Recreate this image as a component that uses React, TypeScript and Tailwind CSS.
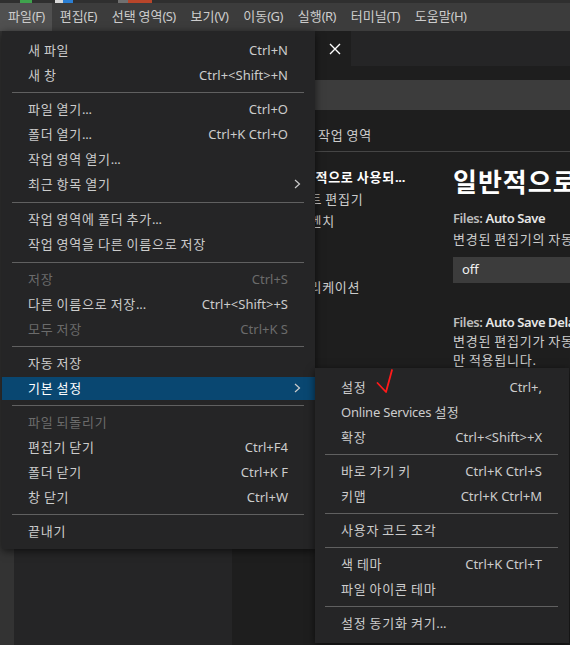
import React from 'react';

const FONT = { fontFamily: '"Noto Sans", "Noto Sans CJK KR", sans-serif' };

// hangul runs get a little extra spacing, latin runs a little less,
// to get closer to the Segoe UI / Malgun Gothic widths of the original
const K = ({ text, ko = 'tracking-[0.75px]', la = 'tracking-[-0.2px]' }: { text: string; ko?: string; la?: string }) => (
  <span>
    {text.split(/([\uAC00-\uD7A3]+)/).map((part, i) =>
      part === '' ? null : (
        <span key={i} className={/[\uAC00-\uD7A3]/.test(part) ? ko : la}>
          {part}
        </span>
      )
    )}
  </span>
);

type Entry =
  | { sep: true; h?: number }
  | { label: string; shortcut?: string; disabled?: boolean; active?: boolean; submenu?: boolean };

const fileMenu: Entry[] = [
  { label: '새 파일', shortcut: 'Ctrl+N' },
  { label: '새 창', shortcut: 'Ctrl+<Shift>+N' },
  { sep: true, h: 9 },
  { label: '파일 열기...', shortcut: 'Ctrl+O' },
  { label: '폴더 열기...', shortcut: 'Ctrl+K Ctrl+O' },
  { label: '작업 영역 열기...' },
  { label: '최근 항목 열기', submenu: true },
  { sep: true, h: 10 },
  { label: '작업 영역에 폴더 추가...' },
  { label: '작업 영역을 다른 이름으로 저장' },
  { sep: true, h: 10 },
  { label: '저장', shortcut: 'Ctrl+S', disabled: true },
  { label: '다른 이름으로 저장...', shortcut: 'Ctrl+<Shift>+S' },
  { label: '모두 저장', shortcut: 'Ctrl+K S', disabled: true },
  { sep: true, h: 9 },
  { label: '자동 저장' },
  { label: '기본 설정', active: true, submenu: true },
  { sep: true, h: 9 },
  { label: '파일 되돌리기', disabled: true },
  { label: '편집기 닫기', shortcut: 'Ctrl+F4' },
  { label: '폴더 닫기', shortcut: 'Ctrl+K F' },
  { label: '창 닫기', shortcut: 'Ctrl+W' },
  { sep: true, h: 9 },
  { label: '끝내기' },
];

const prefMenu: Entry[] = [
  { label: '설정', shortcut: 'Ctrl+,' },
  { label: 'Online Services 설정' },
  { label: '확장', shortcut: 'Ctrl+<Shift>+X' },
  { sep: true, h: 9 },
  { label: '바로 가기 키', shortcut: 'Ctrl+K Ctrl+S' },
  { label: '키맵', shortcut: 'Ctrl+K Ctrl+M' },
  { sep: true, h: 9 },
  { label: '사용자 코드 조각' },
  { sep: true, h: 9 },
  { label: '색 테마', shortcut: 'Ctrl+K Ctrl+T' },
  { label: '파일 아이콘 테마' },
  { sep: true, h: 9 },
  { label: '설정 동기화 켜기...' },
];

const Chevron = () => (
  <svg width="7" height="10" viewBox="0 0 7 10" className="absolute right-[14px] top-[6px]">
    <path d="M1 1 L5.5 5 L1 9" fill="none" stroke="#cccccc" strokeWidth="1.2" />
  </svg>
);

const MenuList = ({ items }: { items: Entry[] }) => (
  <>
    {items.map((e, i) =>
      'sep' in e ? (
        <div key={i} className="flex items-center pl-[10px] pr-[11px]" style={{ height: e.h }}>
          <div className="h-px w-full bg-[#606060]" />
        </div>
      ) : (
        <div key={i} className="h-[25px] py-px">
          <div
            className={`relative flex h-[23px] items-center pl-[26px] pr-[27px] text-[13px] whitespace-nowrap ${
              e.active ? 'bg-[#094771] text-white' : e.disabled ? 'text-[#6b6b6b]' : 'text-[#cccccc]'
            }`}
          >
            <span className="flex-1">
              <K text={e.label} ko={/[A-Za-z]/.test(e.label) ? 'tracking-[0.3px]' : 'tracking-[0.75px]'} />
            </span>
            {e.shortcut && <span className="pl-6">{e.shortcut}</span>}
            {e.submenu && <Chevron />}
          </div>
        </div>
      )
    )}
  </>
);

const MenuBar = () => {
  const names = ['파일(F)', '편집(E)', '선택 영역(S)', '보기(V)', '이동(G)', '실행(R)', '터미널(T)', '도움말(H)'];
  return (
    <div className="h-[31px] bg-[#3c3c3c]">
      <div className="flex h-[3px] bg-[#2f2f2f]">
        <div className="ml-[20px] w-[12px] bg-[#3fa34d]" />
        <div className="ml-[23px] w-[8px] bg-[#d8d8d8]" />
        <div className="w-[10px] bg-[#2a7fd4]" />
        <div className="ml-[45px] w-[10px] bg-[#707070]" />
        <div className="w-[24px] bg-[#b8452a]" />
      </div>
      <div className="flex h-[28px] items-center text-[13px] text-[#cccccc]">
        {names.map((n, i) => (
          <div key={n} className={`flex h-full items-center pl-[8px] pr-[7px] whitespace-nowrap ${i === 0 ? 'bg-[#505050]' : ''}`}>
            <K text={n} ko="tracking-[0px]" la="tracking-[-0.6px]" />
          </div>
        ))}
      </div>
    </div>
  );
};

const Editor = () => (
  <div className="flex min-w-0 flex-1 flex-col overflow-hidden bg-[#1e1e1e]">
    {/* tabs */}
    <div className="flex h-[35px] shrink-0 bg-[#252526]">
      <div className="flex w-[119px] items-center justify-end bg-[#1e1e1e] pr-[10px]">
        <svg width="12" height="12" viewBox="0 0 12 12">
          <path d="M1 1 L11 11 M11 1 L1 11" stroke="#ffffff" strokeWidth="1.4" />
        </svg>
      </div>
    </div>
    {/* search */}
    <div className="mt-[14px] ml-[20px] h-[30px] shrink-0 bg-[#3c3c3c]" />
    <div className="flex h-[42px] shrink-0 items-start border-b border-[#454545] pt-[15px] pl-[86px] text-[13px] leading-[20px] text-[#cccccc] whitespace-nowrap">
      <K text="작업 영역" />
    </div>
    {/* body */}
    <div className="flex">
      <div className="w-[160px] shrink-0 pt-[14px] text-[13px] text-[#cccccc] whitespace-nowrap">
        <div className="h-[22px] pl-[58px] leading-[22px] font-bold text-white">
          <K text="일반적으로 사용되..." />
        </div>
        {['텍스트 편집기', '워크벤치', '창', '기능', '애플리케이션', '확장'].map((t) => (
          <div key={t} className="h-[22px] pl-[52px] leading-[22px]">
            <K text={t} />
          </div>
        ))}
      </div>
      <div className="min-w-0 flex-1 overflow-hidden whitespace-nowrap pl-[61px] text-[13px]">
        <div className="mt-[12px] h-[36px] text-[26px] leading-[36px] font-bold text-white">
          <K text="일반적으로 사용되는 설정" ko="tracking-[1px]" />
        </div>
        <div className="mt-[8px] h-[20px] leading-[20px] font-semibold tracking-[-0.4px]">
          <span className="text-[#bdbdbd]">Files: </span>
          <span className="text-[#e7e7e7]">Auto Save</span>
        </div>
        <div className="mt-px h-[20px] leading-[20px] text-[#cccccc]">
          <K text="변경된 편집기의 자동 저장을 제어합니다." />
        </div>
        <div className="mt-[8px] flex h-[26px] w-[300px] items-center bg-[#3c3c3c] pl-[9px] text-[#f0f0f0]">off</div>
        <div className="mt-[29px] h-[20px] leading-[20px] font-semibold tracking-[-0.4px]">
          <span className="text-[#bdbdbd]">Files: </span>
          <span className="text-[#e7e7e7]">Auto Save Delay</span>
        </div>
        <div className="text-[#cccccc] leading-[19px]">
          <div>
            <K text="변경된 편집기가 자동 저장되기까지의 지연(ms)입니다. 자동 저장을 afterDelay로 설정한 경우에" />
          </div>
          <div>
            <K text="만 적용됩니다." />
          </div>
        </div>
      </div>
    </div>
  </div>
);

export default function App() {
  return (
    <div className="relative h-[645px] w-[570px] overflow-hidden bg-[#1e1e1e]" style={FONT}>
      <MenuBar />
      <div className="flex h-[614px]">
        <div className="w-[14px] shrink-0 bg-[#333333]" />
        <div className="w-[218px] shrink-0 bg-[#252526]" />
        <Editor />
      </div>

      <div className="absolute top-[31px] left-[2px] w-[313px] bg-[#252526] pt-[7px] pb-[5px] shadow-[0_2px_8px_rgba(0,0,0,0.6)]">
        <MenuList items={fileMenu} />
      </div>

      <div className="absolute top-[368px] left-[315px] w-[254px] bg-[#252526] pt-[7px] pb-[7px] shadow-[0_2px_8px_rgba(0,0,0,0.6)]">
        <MenuList items={prefMenu} />
      </div>

      <svg className="absolute top-[366px] left-[372px]" width="24" height="30" viewBox="0 0 24 30">
        <polyline points="5.5,17 14,26 20,4" fill="none" stroke="#ff1a1a" strokeWidth="1.8" strokeLinejoin="round" strokeLinecap="round" />
      </svg>
    </div>
  );
}
